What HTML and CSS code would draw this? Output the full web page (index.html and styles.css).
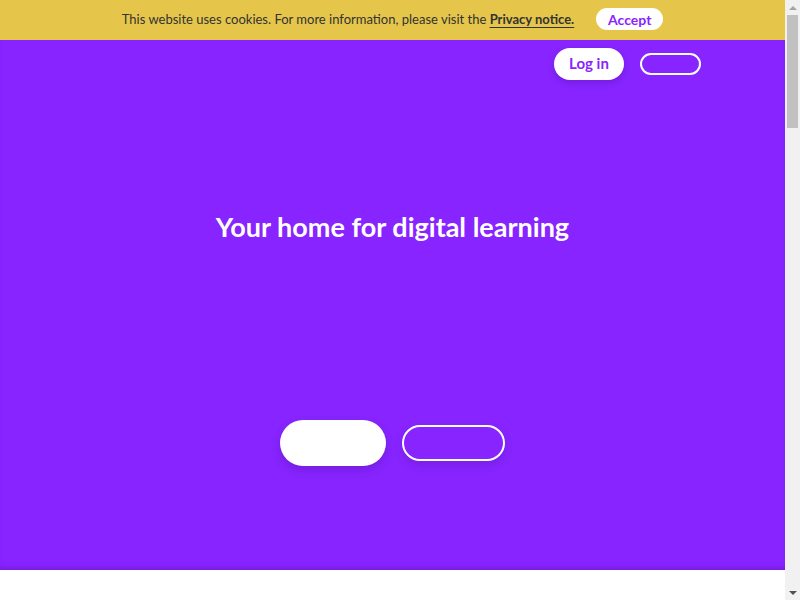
FILE: index.html
```html
<!DOCTYPE html>
<html lang="en">
<head>
<meta charset="utf-8">
<title>Your home for digital learning</title>
<link rel="stylesheet" href="styles.css">
</head>
<body>
<div class="cookie-bar">
  <p class="cookie-text">This website uses cookies. For more information, please visit the <a href="#" class="cookie-link">Privacy notice.</a></p>
  <button class="btn-accept">Accept</button>
</div>
<section class="hero">
  <header class="hero-header">
    <button class="btn-login">Log in</button>
    <button class="btn-ghost-small"></button>
  </header>
  <div class="hero-body">
    <h1 class="hero-title">Your home for digital learning</h1>
  </div>
  <div class="hero-actions">
    <button class="btn-primary-lg"></button>
    <button class="btn-outline-lg"></button>
  </div>
</section>
<main class="content"></main>
<div class="scrollbar" aria-hidden="true">
  <span class="scroll-arrow scroll-up"></span>
  <span class="scroll-track"><span class="scroll-thumb"></span></span>
  <span class="scroll-arrow scroll-down"></span>
</div>
</body>
</html>
```
FILE: styles.css
```css
* { box-sizing: border-box; }
html, body { margin: 0; padding: 0; }
body {
  font-family: "Lato", "Noto Sans", sans-serif;
  background: #fff;
  margin-right: 15px;
}
button {
  font-family: inherit;
  border: none;
  cursor: pointer;
  padding: 0;
}
.cookie-bar {
  height: 40px;
  background: #e5c64a;
  display: flex;
  align-items: center;
  justify-content: center;
  gap: 22px;
  padding-bottom: 2px;
}
.cookie-text {
  margin: 0;
  font-size: 13px;
  color: #333;
}
.cookie-link {
  color: #333;
  font-weight: 700;
  text-decoration: underline;
  text-underline-offset: 3px;
}
.btn-accept {
  width: 67px;
  height: 22px;
  border-radius: 11px;
  background: #fff;
  color: #8a24ff;
  font-weight: 700;
  font-size: 14px;
}
.hero {
  height: 530px;
  background: #8724ff;
  display: flex;
  flex-direction: column;
  box-shadow: inset 0 -6px 6px -4px rgba(60, 0, 120, 0.25);
}
.hero-header {
  display: flex;
  justify-content: flex-end;
  align-items: center;
  gap: 16px;
  padding: 8px 84px 0 0;
  height: 40px;
}
.btn-login {
  width: 70px;
  height: 32px;
  border-radius: 16px;
  background: #fff;
  color: #8a24ff;
  font-weight: 700;
  font-size: 15px;
  padding-bottom: 2px;
  box-shadow: 0 3px 6px rgba(40, 0, 90, 0.2);
}
.btn-ghost-small {
  width: 61px;
  height: 22px;
  border-radius: 11px;
  background: transparent;
  border: 2px solid #fff;
}
.hero-body {
  display: flex;
  justify-content: center;
  padding-top: 133px;
}
.hero-title {
  margin: 0;
  color: #fff;
  font-size: 27px;
  font-weight: 700;
  line-height: 1;
}
.hero-actions {
  display: flex;
  justify-content: center;
  align-items: center;
  gap: 16px;
  margin-top: 180px;
}
.btn-primary-lg {
  width: 106px;
  height: 46px;
  border-radius: 23px;
  background: #fff;
  box-shadow: 0 4px 10px rgba(40, 0, 90, 0.2);
}
.btn-outline-lg {
  width: 103px;
  height: 36px;
  border-radius: 18px;
  background: transparent;
  border: 2px solid #fff;
  box-shadow: 0 4px 10px rgba(40, 0, 90, 0.15);
}
.content {
  display: block;
  height: 2430px;
}
.scrollbar {
  position: fixed;
  top: 0;
  right: 0;
  width: 15px;
  height: 100vh;
  background: #f1f1f1;
  display: flex;
  flex-direction: column;
  align-items: center;
}
.scroll-arrow {
  width: 15px;
  height: 15px;
  display: flex;
  align-items: center;
  justify-content: center;
}
.scroll-arrow::before {
  content: "";
  width: 0;
  height: 0;
  border-left: 4px solid transparent;
  border-right: 4px solid transparent;
}
.scroll-up::before { border-bottom: 4px solid #a3a3a3; }
.scroll-down::before { border-top: 4px solid #505050; }
.scroll-track {
  flex: 1;
  width: 15px;
  display: flex;
  justify-content: center;
}
.scroll-thumb {
  width: 11px;
  height: 113px;
  background: #c1c1c1;
}
```
